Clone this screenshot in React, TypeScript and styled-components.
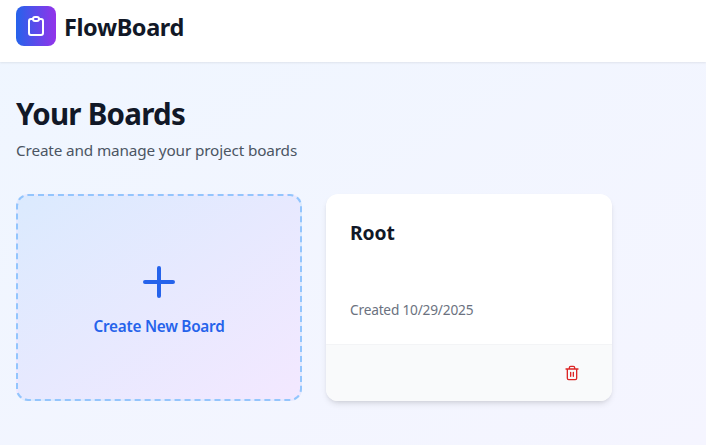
import React from "react";
import styled, { createGlobalStyle } from "styled-components";

const Global = createGlobalStyle`
  *, *::before, *::after { box-sizing: border-box; }
  body { margin: 0; font-family: "Noto Sans", "Open Sans", sans-serif; overflow: hidden; }
  h1, h2, h3, p { margin: 0; }
  button { font: inherit; border: 0; background: none; padding: 0; }
`;

const Page = styled.div`
  height: 445px;
  overflow: hidden;
  background: linear-gradient(to bottom right, #eff6ff, #f5f5ff);
`;

const Header = styled.header`
  height: 62px;
  padding: 6px 16px 0;
  display: flex;
  align-items: flex-start;
  gap: 8px;
  background: #fff;
  box-shadow: 0 1px 2px rgba(0,0,0,.08);
`;

const Logo = styled.div`
  width: 40px;
  height: 40px;
  border-radius: 8px;
  display: grid;
  place-items: center;
  color: #fff;
  background: linear-gradient(to right, #2563eb, #9333ea);
`;

const Brand = styled.span`
  font-size: 23.5px;
  letter-spacing: -0.4px;
  line-height: 40px;
  font-weight: 700;
  color: #111827;
  margin-top: 1px;
`;

const Main = styled.main`
  padding: 34px 16px;
`;

const Title = styled.h1`
  font-size: 29.5px;
  letter-spacing: -0.75px;
  line-height: 36px;
  font-weight: 700;
  color: #111827;
`;

const Subtitle = styled.p`
  margin-top: 6px;
  font-size: 15.3px;
  letter-spacing: -0.14px;
  line-height: 24px;
  color: #4b5563;
`;

const Grid = styled.div`
  margin-top: 32px;
  display: grid;
  grid-template-columns: 286px 286px;
  grid-auto-rows: 207px;
  gap: 24px;
`;

const CreateCard = styled.button`
  border: 2px dashed #93c5fd;
  border-radius: 12px;
  background: linear-gradient(to bottom right, #dbeafe, #f3e8ff);
  display: flex;
  flex-direction: column;
  align-items: center;
  justify-content: center;
  gap: 8px;
  color: #2563eb;
`;

const CreateLabel = styled.span`
  font-size: 15.3px;
  letter-spacing: -0.25px;
  line-height: 24px;
  font-weight: 600;
`;

const BoardCard = styled.article`
  border-radius: 12px;
  background: #fff;
  overflow: hidden;
  display: flex;
  flex-direction: column;
  box-shadow: 0 4px 6px -1px rgba(0,0,0,.1), 0 2px 4px -2px rgba(0,0,0,.1);
`;

const BoardBody = styled.div`
  flex: 1;
  padding: 25px 24px 24px;
  display: flex;
  flex-direction: column;
  justify-content: space-between;
`;

const BoardName = styled.h3`
  font-size: 19.3px;
  letter-spacing: -0.1px;
  line-height: 28px;
  font-weight: 700;
  color: #111827;
`;

const Created = styled.p`
  font-size: 13.7px;
  letter-spacing: -0.2px;
  line-height: 20px;
  color: #6b7280;
`;

const BoardFooter = styled.footer`
  height: 57px;
  padding: 0 32px;
  border-top: 1px solid #f3f4f6;
  background: #f9fafb;
  display: flex;
  align-items: center;
  justify-content: flex-end;
  color: #dc2626;
`;

export default function App() {
  return (
    <Page>
      <Global />
      <Header>
        <Logo>
          <svg width="24" height="24" viewBox="0 0 24 24" fill="none" stroke="currentColor" strokeWidth="2" strokeLinecap="round" strokeLinejoin="round">
            <path d="M9 5H7a2 2 0 00-2 2v12a2 2 0 002 2h10a2 2 0 002-2V7a2 2 0 00-2-2h-2M9 5a2 2 0 002 2h2a2 2 0 002-2M9 5a2 2 0 012-2h2a2 2 0 012 2" />
          </svg>
        </Logo>
        <Brand>FlowBoard</Brand>
      </Header>
      <Main>
        <Title>Your Boards</Title>
        <Subtitle>Create and manage your project boards</Subtitle>
        <Grid>
          <CreateCard>
            <svg width="48" height="48" viewBox="0 0 24 24" fill="none" stroke="currentColor" strokeWidth="2" strokeLinecap="round">
              <path d="M12 5v14M5 12h14" />
            </svg>
            <CreateLabel>Create New Board</CreateLabel>
          </CreateCard>
          <BoardCard>
            <BoardBody>
              <BoardName>Root</BoardName>
              <Created>Created 10/29/2025</Created>
            </BoardBody>
            <BoardFooter>
              <svg width="16" height="16" viewBox="0 0 24 24" fill="none" stroke="currentColor" strokeWidth="2" strokeLinecap="round" strokeLinejoin="round">
                <path d="M3 6h18M19 6v14a2 2 0 0 1-2 2H7a2 2 0 0 1-2-2V6M8 6V4a2 2 0 0 1 2-2h4a2 2 0 0 1 2 2v2M10 11v6M14 11v6" />
              </svg>
            </BoardFooter>
          </BoardCard>
        </Grid>
      </Main>
    </Page>
  );
}
